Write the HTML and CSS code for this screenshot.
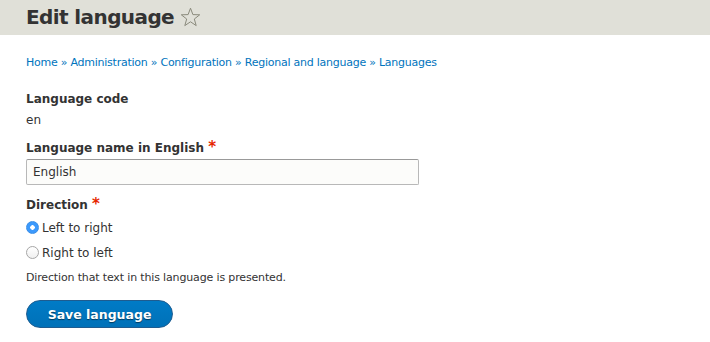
FILE: index.html
```html
<!DOCTYPE html>
<html>
  <head>
    <title>Edit language</title>
    <link rel="stylesheet" href="styles.css">
  </head>
  <body>
    <header class="page-head">
      <h1>Edit language
        <svg class="star" width="21" height="20" viewBox="0 0 21 20">
          <path d="M10.5 1.2 L12.9 7.6 L19.7 7.8 L14.3 12 L16.2 18.6 L10.5 14.8 L4.8 18.6 L6.7 12 L1.3 7.8 L8.1 7.6 Z" fill="none" stroke="#8a8a7c" stroke-width="1" stroke-linejoin="miter"/>
        </svg>
      </h1>
    </header>
    <main class="content">
      <nav class="crumbs">
        <a href="#">Home</a> » <a href="#">Administration</a> » <a href="#">Configuration</a> » <a href="#">Regional and language</a> » <a href="#">Languages</a>
      </nav>
      <form class="lang-form" onsubmit="return false;">
        <div class="item">
          <label class="label">Language code</label>
          <div class="value">en</div>
        </div>
        <div class="item item-name">
          <label class="label" for="name">Language name in English <span class="req">*</span></label>
          <input type="text" id="name" class="text" value="English">
        </div>
        <div class="item">
          <label class="label">Direction <span class="req">*</span></label>
          <div class="radios">
            <label class="radio"><input type="radio" name="dir" checked> Left to right</label>
            <label class="radio"><input type="radio" name="dir"> Right to left</label>
          </div>
          <div class="desc">Direction that text in this language is presented.</div>
        </div>
        <button class="save">Save language</button>
      </form>
    </main>
  </body>
</html>
```

FILE: styles.css
```css
body {
  margin: 0;
  font-family: 'DejaVu Sans', sans-serif;
  color: #333;
  background: #fff;
}
.page-head {
  background: #e0e0d8;
  height: 35px;
  padding: 0 26px;
}
.page-head h1 {
  margin: 0;
  font-size: 20px;
  line-height: 35px;
  font-weight: bold;
  color: #333;
  letter-spacing: -0.6px;
}
.star {
  vertical-align: -3px;
  margin-left: 0;
}
.content {
  padding: 0 26px;
}
.crumbs {
  margin-top: 20px;
  font-size: 11px;
  line-height: 16px;
  letter-spacing: -0.25px;
  color: #0074bd;
}
.crumbs a {
  color: #0074bd;
  text-decoration: none;
}
.lang-form {
  margin-top: 19px;
}
.item {
  margin-bottom: 9px;
}
.item-name {
  margin-bottom: 10px;
}
.label {
  display: block;
  font-weight: bold;
  font-size: 12px;
  line-height: 18px;
  margin-bottom: 3px;
}
.req {
  color: #e62600;
  font-size: 15px;
}
.value {
  font-size: 12px;
  line-height: 18px;
}
.text {
  box-sizing: border-box;
  width: 393px;
  height: 26px;
  border: 1px solid #b8b8b8;
  border-top-color: #999;
  border-radius: 2px;
  background: #fcfcfa;
  padding: 0 6px;
  font-family: inherit;
  font-size: 12px;
  color: #333;
  margin: -1px 0 0;
}
.radios {
  margin-top: -2px;
}
.radio {
  display: flex;
  align-items: center;
  font-size: 12px;
  height: 25px;
}
.radio input {
  appearance: none;
  -webkit-appearance: none;
  box-sizing: border-box;
  margin: 0 3px 0 0;
  width: 13px;
  height: 13px;
  border-radius: 50%;
  border: 1px solid #a6a6a6;
  background: linear-gradient(#fff, #f0f0f0);
}
.radio input:checked {
  border-color: #3a8ee6;
  background: radial-gradient(circle, #fff 0 2px, #3b99fc 2.5px);
}
.desc {
  font-size: 11px;
  letter-spacing: -0.15px;
  line-height: 16px;
  margin-top: 5px;
  color: #333;
}
.save {
  margin-top: 5px;
  background: linear-gradient(#007bc6, #0071b8);
  border: 1px solid #1e5c90;
  color: #fff;
  font-family: inherit;
  font-weight: bold;
  font-size: 12.5px;
  border-radius: 20px;
  width: 147px;
  height: 28px;
  text-shadow: 0 1px 1px rgba(0,0,0,0.5);
  cursor: pointer;
}
```
